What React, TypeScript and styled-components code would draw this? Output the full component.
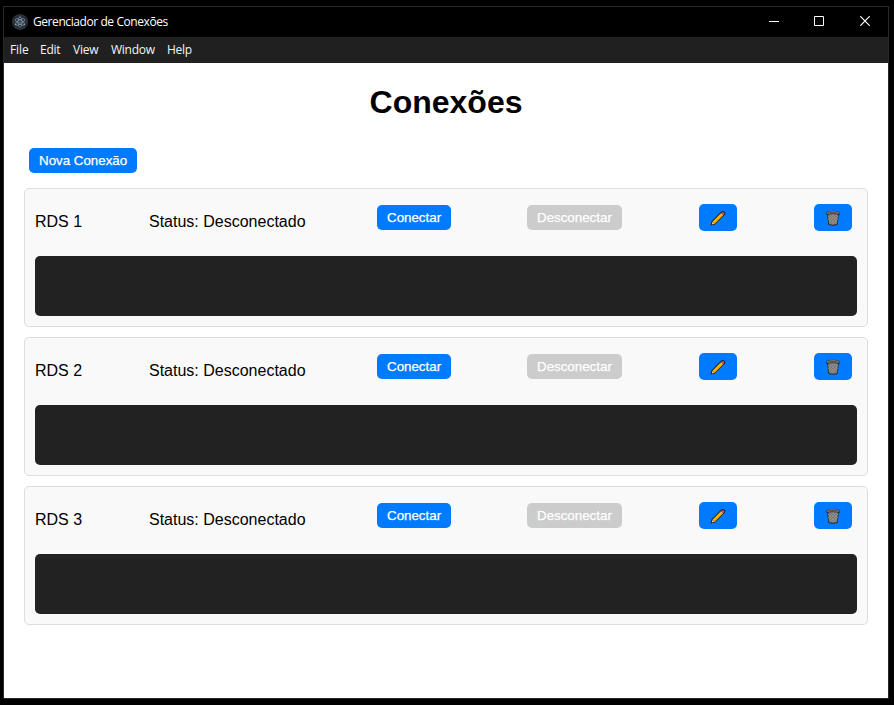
import React from "react";
import styled, { createGlobalStyle } from "styled-components";

const GlobalStyle = createGlobalStyle`
  *, *::before, *::after { box-sizing: border-box; }
  body { margin: 0; background: #000; }
`;

const Desktop = styled.div`
  width: 894px;
  height: 705px;
  padding: 6px 5px 6px 3px;
  background: #000;
  overflow: hidden;
`;

const AppWindow = styled.div`
  display: flex;
  flex-direction: column;
  height: 693px;
  border: 1px solid #292929;
  background: #fff;
  font-family: "Liberation Sans", Arial, sans-serif;
`;

const TitleBar = styled.header`
  display: flex;
  align-items: center;
  height: 30px;
  padding-left: 8px;
  background: #000;
  color: #fff;
  font: 12px/16px "Open Sans", "Segoe UI", sans-serif;
  svg { display: block; flex: none; }
`;

const Title = styled.span`
  margin-left: 5px;
  letter-spacing: -0.42px;
  white-space: nowrap;
`;

const WindowControls = styled.div`
  display: flex;
  margin-left: auto;
`;

const WindowControl = styled.div<{ $width: number }>`
  display: grid;
  place-items: center;
  width: ${(p) => p.$width}px;
  height: 30px;
  padding-bottom: 2px;
`;

const MenuBar = styled.nav`
  display: flex;
  align-items: center;
  height: 26px;
  padding-left: 6px;
  background: #202020;
  color: #f4f4f4;
  font: 12px/16px "Open Sans", "Segoe UI", sans-serif;
`;

const MenuItem = styled.span<{ $width: number; $spacing: number }>`
  width: ${(p) => p.$width}px;
  letter-spacing: ${(p) => p.$spacing}px;
  white-space: nowrap;
`;

const Content = styled.main`
  flex: 1;
  padding: 21px 20px 20px;
`;

const Heading = styled.h1`
  margin: 0 0 27px;
  font-size: 32px;
  line-height: 37px;
  text-align: center;
  color: #000;
`;

const Button = styled.button<{ $icon?: boolean }>`
  display: inline-flex;
  align-items: center;
  justify-content: center;
  justify-self: start;
  height: ${(p) => (p.$icon ? 27 : 25)}px;
  width: ${(p) => (p.$icon ? "38px" : "auto")};
  padding: 0 10px;
  border: 0;
  border-radius: 5px;
  background: #007bff;
  color: #fff;
  font: 13.333px/15px "Liberation Sans", Arial, sans-serif;
  -webkit-text-stroke: 0.25px currentColor;
  &:disabled { background: #ccc; }
  svg { flex: none; display: block; }
`;

const NewButton = styled(Button)`
  margin-left: 5px;
`;

const List = styled.div`
  display: flex;
  flex-direction: column;
  gap: 10px;
  margin-top: 15px;
`;

const Card = styled.section`
  height: 139px;
  padding: 10px;
  border: 1px solid #ddd;
  border-radius: 5px;
  background: #f9f9f9;
`;

const Row = styled.div`
  display: grid;
  grid-template-columns: 114px 228px 150px 172px 115px 38px;
  align-items: center;
  height: 37px;
  margin-bottom: 20px;
`;

const Label = styled.span`
  padding-top: 8px;
  font-size: 16px;
  line-height: 18px;
  color: #000;
  white-space: nowrap;
`;

const Console = styled.div`
  height: 60px;
  border-radius: 5px;
  background: #222;
`;

const Logo = () => (
  <svg width="16" height="16" viewBox="0 0 16 16">
    <circle cx="8" cy="8" r="8" fill="#2b2e3b" />
    <g fill="none" stroke="#7f9fab" strokeWidth="0.65">
      <ellipse cx="8" cy="8" rx="5.2" ry="2" transform="rotate(30 8 8)" />
      <ellipse cx="8" cy="8" rx="5.2" ry="2" transform="rotate(-30 8 8)" />
      <ellipse cx="8" cy="8" rx="5.2" ry="2" transform="rotate(90 8 8)" />
    </g>
    <g fill="#9fc5cf">
      <circle cx="8" cy="8" r="0.6" />
      <circle cx="3.8" cy="10.6" r="0.6" />
      <circle cx="12.2" cy="10.6" r="0.6" />
      <circle cx="8" cy="3" r="0.6" />
    </g>
  </svg>
);

const PencilIcon = () => (
  <svg width="16" height="16" viewBox="0 0 16 16">
    <path d="M.5 15.5 1.6 11.2 11.2 1.6Q12.8.2 14.5 1.7T14.6 5L5 14.5Z" fill="#202020" />
    <path d="M2.5 11.7 10.2 4 12.3 6.1 4.6 13.8Z" fill="#ffb900" />
    <path d="M3.8 13 11.5 5.3 12.3 6.1 4.6 13.8Z" fill="#eda000" />
    <path d="M2.4 12 4.2 13.8 1.8 14.5Z" fill="#ffd8a0" />
    <path d="M10.2 4 11 3.2 13.1 5.3 12.3 6.1Z" fill="#d0d0d0" />
    <path d="M11 3.2 11.8 2.4Q12.7 1.4 13.8 2.5T13.9 4.5L13.1 5.3Z" fill="#e74856" />
  </svg>
);

const TrashIcon = () => (
  <svg width="16" height="16" viewBox="0 0 16 16">
    <path d="M1.3 2.8Q1.6.8 8 .8T14.7 2.8L14.4 5H13.8L12.8 14Q12.5 15.7 8 15.7T3.2 14L2.2 5H1.6Z" fill="#2b2b2b" />
    <path d="M3 5H13L12 13.7Q10.8 14.7 8 14.7T4 13.7Z" fill="#777" />
    <path d="M3 6 11 14M5 5 12.2 12.2M8 5 12.6 9.6M11 5 13 7M3.5 9 8.6 14.1M13 6 5 14M11 5 3.8 12.2M8 5 3.4 9.6M12.5 9 7.4 14.1" stroke="#a0a0a0" strokeWidth=".55" />
    <ellipse cx="8" cy="3" rx="5.8" ry="1.4" fill="#4d4d4d" stroke="#8c8c8c" strokeWidth=".8" />
  </svg>
);

const menuItems = [
  { name: "File", width: 30, spacing: -0.1 },
  { name: "Edit", width: 33, spacing: -0.25 },
  { name: "View", width: 38, spacing: -0.2 },
  { name: "Window", width: 56, spacing: -0.25 },
  { name: "Help", width: 30, spacing: -0.3 },
];

const connections = ["RDS 1", "RDS 2", "RDS 3"];

function ConnectionCard({ name }: { name: string }) {
  return (
    <Card>
      <Row>
        <Label>{name}</Label>
        <Label>Status: Desconectado</Label>
        <Button>Conectar</Button>
        <Button disabled>Desconectar</Button>
        <Button $icon aria-label="Editar"><PencilIcon /></Button>
        <Button $icon aria-label="Excluir"><TrashIcon /></Button>
      </Row>
      <Console />
    </Card>
  );
}

export default function App() {
  return (
    <Desktop>
      <GlobalStyle />
      <AppWindow>
        <TitleBar>
          <Logo />
          <Title>Gerenciador de Conexões</Title>
          <WindowControls>
            <WindowControl $width={44}>
              <svg width="10" height="10"><path d="M0 5.5H10" stroke="#fff" /></svg>
            </WindowControl>
            <WindowControl $width={46}>
              <svg width="10" height="10"><path d="M.5.5H9.5V9.5H.5Z" fill="none" stroke="#fff" /></svg>
            </WindowControl>
            <WindowControl $width={46}>
              <svg width="10" height="10"><path d="M.3.3 9.7 9.7M9.7.3.3 9.7" stroke="#fff" strokeWidth="1.2" /></svg>
            </WindowControl>
          </WindowControls>
        </TitleBar>
        <MenuBar>
          {menuItems.map((m) => (
            <MenuItem key={m.name} $width={m.width} $spacing={m.spacing}>{m.name}</MenuItem>
          ))}
        </MenuBar>
        <Content>
          <Heading>Conexões</Heading>
          <NewButton>Nova Conexão</NewButton>
          <List>
            {connections.map((name) => <ConnectionCard key={name} name={name} />)}
          </List>
        </Content>
      </AppWindow>
    </Desktop>
  );
}
